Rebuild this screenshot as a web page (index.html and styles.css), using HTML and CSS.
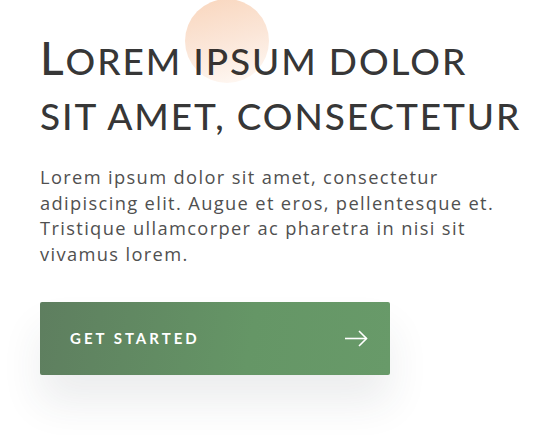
FILE: index.html
```html
<!DOCTYPE html>
<html>
<head>
<meta charset="utf-8">
<link rel="stylesheet" href="styles.css">
</head>
<body>
<main class="hero">
  <div class="blob"></div>
  <h1 class="title">Lorem ipsum dolor<br>sit amet, consectetur</h1>
  <p class="lead">Lorem ipsum dolor sit amet, consectetur adipiscing elit. Augue et eros, pellentesque et. Tristique ullamcorper ac pharetra in nisi sit vivamus lorem.</p>
  <a class="cta" href="#">
    <span class="cta-label">GET STARTED</span>
    <svg class="cta-arrow" width="24" height="17" viewBox="0 0 24 17" fill="none" stroke="#fff" stroke-width="1.6">
      <path d="M1 8.5H22.5"/>
      <path d="M15 1L22.5 8.5L15 16"/>
    </svg>
  </a>
</main>
</body>
</html>
```
FILE: styles.css
```css
html, body {
  margin: 0;
  padding: 0;
  background: #fff;
}
.hero {
  position: relative;
  padding: 30px 0 70px 40px;
  font-family: Lato, "Open Sans", sans-serif;
}
.blob {
  position: absolute;
  left: 185px;
  top: -1px;
  width: 84px;
  height: 84px;
  border-radius: 50%;
  background: linear-gradient(165deg, #f9d6bd 0%, #fbe6d8 50%, #fffaf6 100%);
  z-index: 0;
}
.title {
  position: relative;
  z-index: 1;
  margin: 0;
  font-size: 37px;
  line-height: 55px;
  font-weight: 500;
  text-transform: uppercase;
  letter-spacing: 1.9px;
  color: rgba(0, 0, 0, 0.8);
}
.title::first-letter {
  font-size: 46px;
}
.lead {
  margin: 21px 0 0;
  width: 475px;
  font-family: "Open Sans", Lato, sans-serif;
  font-size: 18.3px;
  line-height: 25.7px;
  color: #505050;
  letter-spacing: 1.35px;
}
.cta {
  margin-top: 35px;
  width: 350px;
  height: 73px;
  box-sizing: border-box;
  padding: 0 22px 0 30px;
  display: flex;
  align-items: center;
  justify-content: space-between;
  text-decoration: none;
  border-radius: 2px;
  background: linear-gradient(100deg, #5e7e5f 0%, #659666 60%, #689a69 100%);
  box-shadow: 0 28px 40px rgba(40, 50, 70, 0.09);
}
.cta-label {
  color: #fff;
  font-size: 15px;
  font-weight: 700;
  letter-spacing: 3px;
}
.cta-arrow {
  display: block;
}
```
